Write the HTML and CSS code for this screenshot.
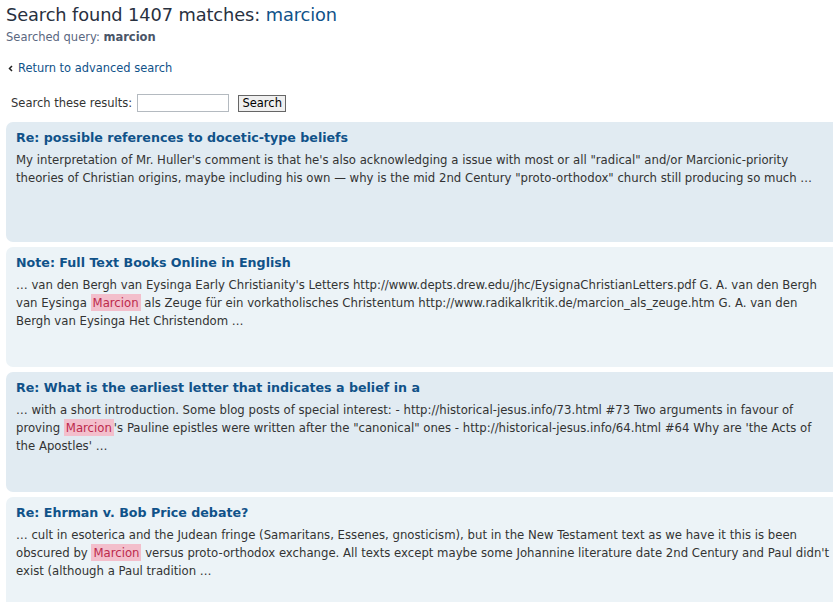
FILE: index.html
```html
<!DOCTYPE html>
<html>
<head>
<meta charset="utf-8">
<title>Search</title>
<link rel="stylesheet" href="styles.css">
</head>
<body>
<div class="page">
  <h2 class="search-title">Search found 1407 matches: <a href="#" class="q">marcion</a></h2>
  <p class="searched">Searched query: <strong>marcion</strong></p>
  <p class="return"><svg class="chev" width="5" height="7" viewBox="0 0 5 7"><path d="M4 1 L1.5 3.5 L4 6" fill="none" stroke="#222" stroke-width="1.5"/></svg><a href="#">Return to advanced search</a></p>
  <form class="search-box">
    <label>Search these results:</label>
    <input type="text" class="inputbox">
    <button type="button" class="button">Search</button>
  </form>

  <div class="results">
    <div class="result bg2">
      <h3><a href="#">Re: possible references to docetic-type beliefs</a></h3>
      <div class="content">My interpretation of Mr. Huller's comment is that he's also acknowledging a issue with most or all "radical" and/or Marcionic-priority<br>theories of Christian origins, maybe including his own — why is the mid 2nd Century "proto-orthodox" church still producing so much …</div>
    </div>
    <div class="result bg1">
      <h3><a href="#">Note: Full Text Books Online in English</a></h3>
      <div class="content">… van den Bergh van Eysinga Early Christianity's Letters http://www.depts.drew.edu/jhc/EysignaChristianLetters.pdf G. A. van den Bergh<br>van Eysinga <span class="hilit">Marcion</span> als Zeuge für ein vorkatholisches Christentum http://www.radikalkritik.de/marcion_als_zeuge.htm G. A. van den<br>Bergh van Eysinga Het Christendom …</div>
    </div>
    <div class="result bg2">
      <h3><a href="#">Re: What is the earliest letter that indicates a belief in a</a></h3>
      <div class="content">… with a short introduction. Some blog posts of special interest: - http://historical-jesus.info/73.html #73 Two arguments in favour of<br>proving <span class="hilit">Marcion</span>'s Pauline epistles were written after the "canonical" ones - http://historical-jesus.info/64.html #64 Why are 'the Acts of<br>the Apostles' …</div>
    </div>
    <div class="result bg1">
      <h3><a href="#">Re: Ehrman v. Bob Price debate?</a></h3>
      <div class="content">… cult in esoterica and the Judean fringe (Samaritans, Essenes, gnosticism), but in the New Testament text as we have it this is been<br>obscured by <span class="hilit">Marcion</span> versus proto-orthodox exchange. All texts except maybe some Johannine literature date 2nd Century and Paul didn't<br>exist (although a Paul tradition …</div>
    </div>
  </div>
</div>
</body>
</html>
```

FILE: styles.css
```css
html, body {
  margin: 0;
  padding: 0;
  overflow: hidden;
  background: #fff;
}
body {
  font-family: "DejaVu Sans", Verdana, sans-serif;
  color: #536482;
  font-size: 11px;
}
a { text-decoration: none; color: #105289; }
.page {
  padding: 0 0 0 6px;
  width: 880px;
}
.search-title {
  margin: 0;
  padding-top: 4px;
  font-family: "DejaVu Sans", sans-serif;
  font-weight: normal;
  font-size: 17.8px;
  line-height: 22px;
  color: #28313f;
  letter-spacing: -0.1px;
}
.search-title .q { color: #105289; }
.searched {
  margin: 4px 0 0;
  font-size: 11.5px;
  line-height: 14px;
  color: #5a6780;
}
.searched strong { color: #4a5568; }
.return {
  margin: 17px 0 0 2px;
  font-size: 11.45px;
  line-height: 14px;
  display: flex;
  align-items: center;
  gap: 5px;
}
.chev { display: block; }
.search-box {
  margin: 19px 0 0 5px;
  display: flex;
  align-items: center;
  height: 18px;
  font-size: 11.5px;
  color: #333;
}
.search-box label { color: #333; }
.inputbox {
  margin: 0 0 0 5px;
  width: 88px;
  height: 14px;
  padding: 1px;
  border: 1px solid #b4bac0;
  background: #fff;
}
.button {
  margin-left: 9px;
  height: 17px;
  width: 48px;
  padding: 0;
  font-family: "DejaVu Sans", sans-serif;
  font-size: 11.5px;
  border: 1px solid #666;
  background: #efefef;
  color: #000;
  line-height: 13px;
}
.results {
  margin-top: 10px;
  display: flex;
  flex-direction: column;
  gap: 5px;
}
.result {
  height: 120px;
  box-sizing: border-box;
  border-radius: 7px;
  padding: 6px 10px 0;
}
.bg2 { background: #e1ebf2; }
.bg1 { background: #ecf3f7; }
.result h3 {
  margin: 0;
  padding-top: 1px;
  font-family: "DejaVu Sans", sans-serif;
  font-size: 12.65px;
  line-height: 18px;
  font-weight: bold;
}
.result h3 a { color: #105289; }
.content {
  margin-top: 4px;
  font-family: "DejaVu Sans Condensed", "DejaVu Sans", sans-serif;
  font-size: 13px;
  line-height: 18px;
  color: #333;
  white-space: nowrap;
}
.hilit {
  background: #f3bfcc;
  color: #bc2a4d;
  padding: 1px 2px;
}
```
